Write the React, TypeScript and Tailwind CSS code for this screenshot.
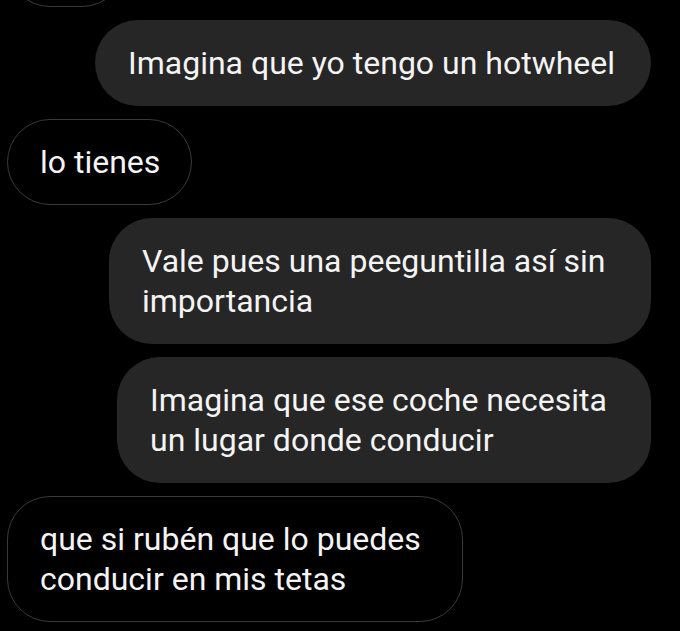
const font = { fontFamily: 'Roboto, "Noto Sans", sans-serif' };

function Filled({ w, lines }: { w: string; lines: string[] }) {
  return (
    <div className={`${w} self-end rounded-[43px] bg-[#262626] px-[33px] py-[23px] text-[32px] leading-[40px] text-[#f4f4f4] whitespace-nowrap`}>
      {lines.map((l) => (
        <div key={l}>{l}</div>
      ))}
    </div>
  );
}

function Outlined({ w, lines }: { w: string; lines: string[] }) {
  return (
    <div className={`${w} self-start rounded-[43px] border border-[#3a3a3a] px-[32px] py-[22px] text-[32px] leading-[40px] text-[#f4f4f4] whitespace-nowrap`}>
      {lines.map((l) => (
        <div key={l}>{l}</div>
      ))}
    </div>
  );
}

export default function App() {
  return (
    <div className="h-[631px] w-[680px] overflow-hidden bg-black" style={font}>
      <div className="flex flex-col gap-[13px] pl-[7px] pr-[29px]">
        <div className="-mt-[79px] h-[86px] w-[118px] self-start rounded-[43px] border border-[#3a3a3a]" />
        <Filled w="w-[556px]" lines={['Imagina que yo tengo un hotwheel']} />
        <Outlined w="w-[185px]" lines={['lo tienes']} />
        <Filled w="w-[542px]" lines={['Vale pues una peeguntilla así sin', 'importancia']} />
        <Filled w="w-[534px]" lines={['Imagina que ese coche necesita', 'un lugar donde conducir']} />
        <Outlined w="w-[456px]" lines={['que si rubén que lo puedes', 'conducir en mis tetas']} />
      </div>
    </div>
  );
}
